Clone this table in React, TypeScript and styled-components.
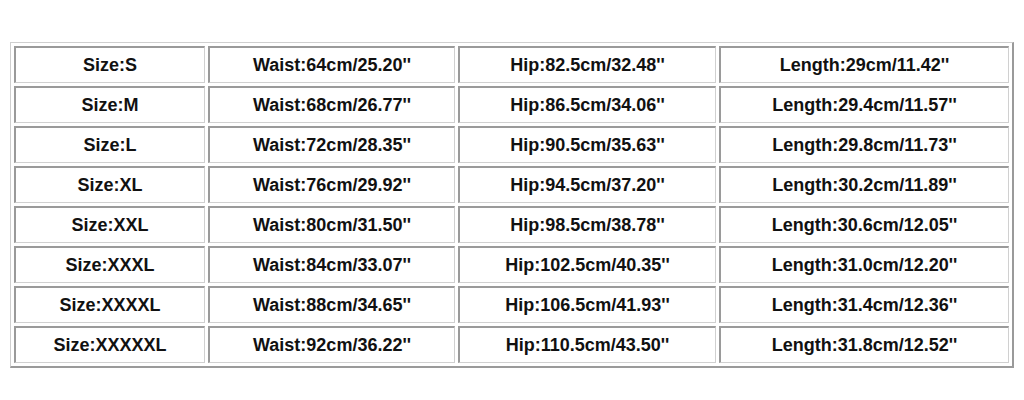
import React from "react";
import styled, { createGlobalStyle } from "styled-components";

const GlobalStyle = createGlobalStyle`
  html, body {
    margin: 0;
    padding: 0;
    background: #ffffff;
  }
  body {
    font-family: "Liberation Sans", Arial, sans-serif;
  }
`;

const Page = styled.div`
  width: 1024px;
  height: 400px;
  padding: 42px 0 0 10px;
  box-sizing: border-box;
  background: #ffffff;
`;

const SizeTable = styled.table`
  border-collapse: separate;
  border-spacing: 3px;
  border-style: solid;
  border-width: 1px 2px 2px 1px;
  border-color: #cfcfcf #9a9a9a #9a9a9a #cfcfcf;
  table-layout: fixed;
  width: 1003px;
`;

const Cell = styled.td<{ $width: number }>`
  width: ${({ $width }) => $width}px;
  height: 37px;
  box-sizing: border-box;
  padding: 0;
  border-style: solid;
  border-width: 2px 1px 1px 2px;
  border-color: #9a9a9a #d0d0d0 #d0d0d0 #9a9a9a;
  text-align: center;
  vertical-align: middle;
  font-family: "Liberation Sans", Arial, sans-serif;
  font-weight: bold;
  font-size: 18px;
  color: #111111;
  white-space: nowrap;
`;

type SizeRow = {
  size: string;
  waist: string;
  hip: string;
  length: string;
};

const rows: SizeRow[] = [
  { size: "S", waist: "64cm/25.20", hip: "82.5cm/32.48", length: "29cm/11.42" },
  { size: "M", waist: "68cm/26.77", hip: "86.5cm/34.06", length: "29.4cm/11.57" },
  { size: "L", waist: "72cm/28.35", hip: "90.5cm/35.63", length: "29.8cm/11.73" },
  { size: "XL", waist: "76cm/29.92", hip: "94.5cm/37.20", length: "30.2cm/11.89" },
  { size: "XXL", waist: "80cm/31.50", hip: "98.5cm/38.78", length: "30.6cm/12.05" },
  { size: "XXXL", waist: "84cm/33.07", hip: "102.5cm/40.35", length: "31.0cm/12.20" },
  { size: "XXXXL", waist: "88cm/34.65", hip: "106.5cm/41.93", length: "31.4cm/12.36" },
  { size: "XXXXXL", waist: "92cm/36.22", hip: "110.5cm/43.50", length: "31.8cm/12.52" },
];

const colWidths = [191, 247, 258, 290];

export default function App() {
  return (
    <>
      <GlobalStyle />
      <Page>
        <SizeTable>
          <tbody>
            {rows.map((r) => (
              <tr key={r.size}>
                <Cell $width={colWidths[0]}>Size:{r.size}</Cell>
                <Cell $width={colWidths[1]}>Waist:{r.waist}''</Cell>
                <Cell $width={colWidths[2]}>Hip:{r.hip}''</Cell>
                <Cell $width={colWidths[3]}>Length:{r.length}''</Cell>
              </tr>
            ))}
          </tbody>
        </SizeTable>
      </Page>
    </>
  );
}
